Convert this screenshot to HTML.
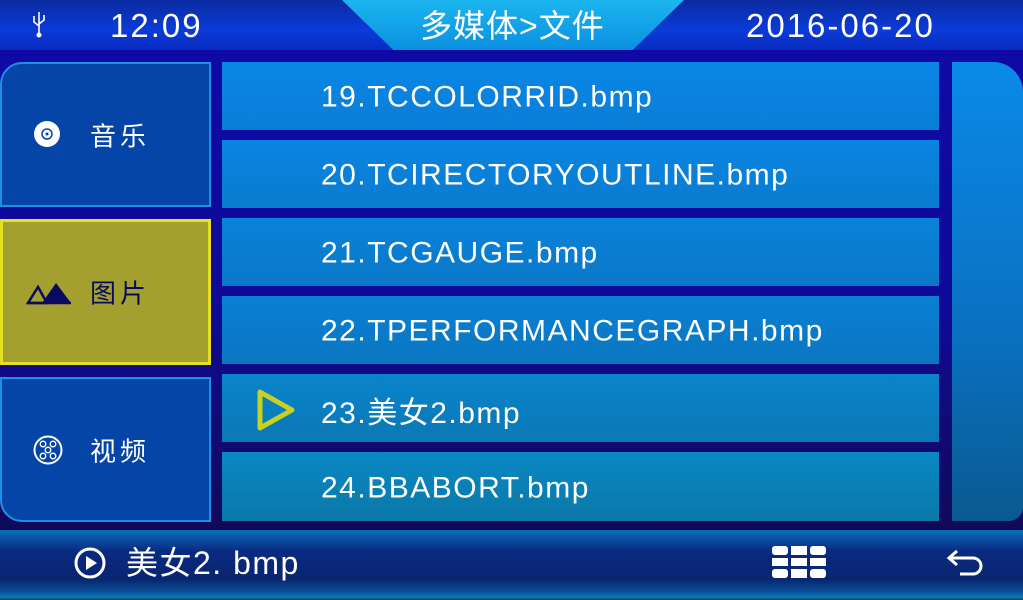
<!DOCTYPE html>
<html><head><meta charset="utf-8"><style>
*{margin:0;padding:0;box-sizing:border-box}
body{width:1023px;height:600px;overflow:hidden;position:relative;font-family:"Liberation Sans","Noto Sans CJK SC",sans-serif;background:linear-gradient(#0f0aa8 0%,#0f0a98 50%,#100a60 85%,#0c0a35 100%)}
.top{position:absolute;left:0;top:0;width:1023px;height:50px;background:linear-gradient(#0a2aa0,#0b3bd8 60%,#0a2bc0);}
.trap{position:absolute;left:342px;top:0;width:342px;height:50px;background:linear-gradient(#1cb6f0,#0a8fe0);clip-path:polygon(0 0,100% 0,85% 100%,15% 100%)}
.t{position:absolute;color:#fff;font-size:33px;top:7px;line-height:38px}
.left{position:absolute;left:0;width:211px;background:#0645a8;border:2px solid #1d8fe6}
.left span{position:absolute;left:88px;top:50%;transform:translateY(-50%);color:#fff;font-size:26px;letter-spacing:4px}
.row{position:absolute;left:222px;width:717px;height:69px}
.row span{position:absolute;left:99px;top:50%;transform:translateY(-46%);color:#fff;font-size:30px;letter-spacing:1.5px}
.bot{position:absolute;left:0;top:530px;width:1023px;height:70px;background:linear-gradient(#0a70b8 0%,#0a4c9c 14%,#0a2a80 30%,#082570 70%,#0a4e96 88%,#0a7ab8 96%,#064060 100%)}
</style></head><body>
<div class="top"></div>
<div class="trap"></div>
<svg style="position:absolute;left:31px;top:10px" width="16" height="30" viewBox="0 0 16 30"><path d="M8 2v22M3 6v6l5 4M13 5v5l-5 4" stroke="#fff" stroke-width="1.6" fill="none"/><circle cx="8" cy="25" r="2.5" fill="#fff"/></svg>
<div class="t" style="left:110px;letter-spacing:2px">12:09</div>
<div class="t" style="left:420px;letter-spacing:1px;font-size:32px">多媒体&gt;文件</div>
<div class="t" style="left:746px;letter-spacing:2px">2016-06-20</div>

<div class="left" style="top:62px;height:145px;border-radius:22px 0 0 0"><svg style="position:absolute;left:31px;top:56px" width="28" height="28"><circle cx="14" cy="14" r="13" fill="#fff"/><circle cx="14" cy="14" r="5" fill="none" stroke="#0645a8" stroke-width="1.5"/><circle cx="14" cy="14" r="1.5" fill="#0645a8"/></svg><span>音乐</span></div>
<div class="left" style="top:219px;height:146px;background:#a3a030;border:3px solid #e6e020"><svg style="position:absolute;left:22px;top:58px" width="48" height="26"><path d="M3 23L13 7L22 23Z" fill="none" stroke="#0a0a60" stroke-width="2.5"/><path d="M17 23L31 3L46 23Z" fill="#0a0a60"/><path d="M2 23H46" stroke="#0a0a60" stroke-width="2.5"/></svg><span style="color:#0a0a60;left:87px">图片</span></div>
<div class="left" style="top:377px;height:145px;border-radius:0 0 0 22px"><svg style="position:absolute;left:31px;top:56px" width="30" height="30"><circle cx="15" cy="15" r="13.5" fill="none" stroke="#fff" stroke-width="2"/><g fill="none" stroke="#fff" stroke-width="1.3"><circle cx="10" cy="9" r="2.8"/><circle cx="20" cy="9" r="2.8"/><circle cx="15" cy="15" r="2.8"/><circle cx="10" cy="21" r="2.8"/><circle cx="20" cy="21" r="2.8"/></g></svg><span>视频</span></div>

<div class="row" style="top:62px;height:68px;background:linear-gradient(#0a86e6,#0a7ed6)"><span>19.TCCOLORRID.bmp</span></div>
<div class="row" style="top:140px;height:68px;background:linear-gradient(#0a84e0,#0a7cd0)"><span>20.TCIRECTORYOUTLINE.bmp</span></div>
<div class="row" style="top:218px;height:68px;background:linear-gradient(#0a82da,#0a78c8)"><span>21.TCGAUGE.bmp</span></div>
<div class="row" style="top:296px;height:68px;background:linear-gradient(#0a80d4,#0a76c0)"><span>22.TPERFORMANCEGRAPH.bmp</span></div>
<div class="row" style="top:374px;height:68px;background:linear-gradient(#0a84cc,#0a78b4)"><svg style="position:absolute;left:34px;top:14px" width="42" height="44"><path d="M4 4L36 22L4 40Z" fill="none" stroke="#c8d020" stroke-width="5" stroke-linejoin="round"/></svg><span>23.美女2.bmp</span></div>
<div class="row" style="top:452px;height:69px;background:linear-gradient(#0a88c4,#0a78a8)"><span>24.BBABORT.bmp</span></div>
<div style="position:absolute;left:952px;top:62px;width:71px;height:459px;border-radius:0 30px 14px 0;background:linear-gradient(#0a8ae8,#0a70c0 60%,#0a5a90)"></div>

<div class="bot"></div>
<svg style="position:absolute;left:74px;top:547px" width="32" height="32"><circle cx="16" cy="16" r="14" fill="none" stroke="#fff" stroke-width="3"/><path d="M12 9L23 16L12 23Z" fill="#fff"/></svg>
<div style="position:absolute;left:126px;top:544px;color:#fff;font-size:32px;line-height:38px;letter-spacing:1.5px">美女2. bmp</div>
<svg style="position:absolute;left:772px;top:546px" width="54" height="32"><g fill="#fff"><rect x="0" y="0" width="16" height="9" rx="3"/><rect x="19" y="0" width="16" height="9"/><rect x="38" y="0" width="16" height="9" rx="3"/><rect x="0" y="12" width="16" height="8"/><rect x="19" y="12" width="16" height="8"/><rect x="38" y="12" width="16" height="8"/><rect x="0" y="23" width="16" height="9" rx="3"/><rect x="19" y="23" width="16" height="9"/><rect x="38" y="23" width="16" height="9" rx="3"/></g></svg>
<svg style="position:absolute;left:946px;top:548px" width="40" height="30"><path d="M11 3L3 10L11 17M3 10H27A8 8 0 0 1 27 26H14" fill="none" stroke="#fff" stroke-width="3"/></svg>
</body></html>
